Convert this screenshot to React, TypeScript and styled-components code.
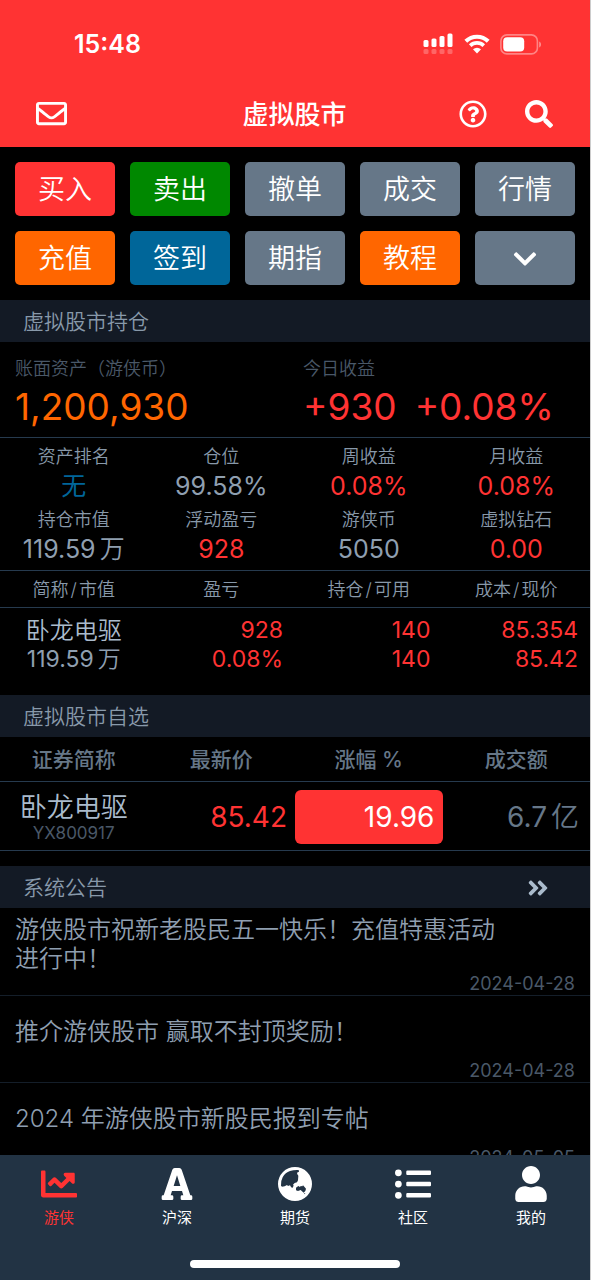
import React from "react";
import styled, { createGlobalStyle } from "styled-components";
import {
  FaRegEnvelope,
  FaRegQuestionCircle,
  FaSearch,
  FaChevronDown,
  FaAngleDoubleRight,
  FaChartLine,
  FaListUl,
  FaUser,
} from "react-icons/fa";

const color = {
  red: "#ff3333",
  orange: "#ff6600",
  green: "#008800",
  blue: "#006699",
  slate: "#667788",
  bar: "#223344",
  section: "#131a25",
  line: "#263a4e",
  faint: "#4a5868",
  muted: "#8899aa",
  text: "#8f9fb0",
  bright: "#aabbcc",
};

const GlobalStyle = createGlobalStyle`
  *, *::before, *::after { box-sizing: border-box; }
  body {
    margin: 0;
    background: #000;
    font-family: Inter, "Noto Sans CJK SC", sans-serif;
    font-weight: 350;
    color: ${color.text};
  }
  button { font: inherit; border: 0; padding: 0; cursor: pointer; }
  a { color: inherit; text-decoration: none; }
  h1, h2, p, dl, dd, ul { margin: 0; padding: 0; font-weight: inherit; }
  ul { list-style: none; }
`;

const Screen = styled.div`
  display: flex;
  flex-direction: column;
  height: 100vh;
  overflow: hidden;
  border-right: 1px solid #ccc;
  background: #000;
`;

const Header = styled.header`
  flex: none;
  background: ${color.red};
  color: #fff;
`;

const StatusBar = styled.div`
  display: flex;
  align-items: center;
  justify-content: space-between;
  height: 80px;
  padding: 8px 48px 0 74px;
`;

const Clock = styled.time`
  font-size: 25px;
  font-weight: 600;
  line-height: 32px;
`;

const StatusIcons = styled.div`
  display: flex;
  align-items: center;
  gap: 10px;
`;

const NavBar = styled.div`
  display: grid;
  grid-template-columns: 1fr auto 1fr;
  align-items: center;
  height: 67px;
  padding: 0 37px 0 36px;
`;

const Title = styled.h1`
  padding-top: 2px;
  font-size: 26px;
  font-weight: 500;
  line-height: 36px;
`;

const NavActions = styled.div<{ $end?: boolean }>`
  display: flex;
  align-items: center;
  gap: 38px;
  justify-content: ${(p) => (p.$end ? "flex-end" : "flex-start")};
`;

const IconButton = styled.button`
  display: flex;
  background: none;
  color: inherit;
`;

const Content = styled.main`
  flex: 1;
  min-height: 0;
  overflow-y: auto;
  scrollbar-width: none;
`;

const Actions = styled.nav`
  display: grid;
  grid-template-columns: repeat(5, 1fr);
  gap: 15px;
  padding: 15px;
`;

const ActionButton = styled.button<{ $bg: string }>`
  display: flex;
  align-items: center;
  justify-content: center;
  height: 54px;
  padding-top: 2px;
  border-radius: 5px;
  background: ${(p) => p.$bg};
  color: #fff;
  font-size: 27px;
  line-height: 52px;
`;

const SectionHead = styled.div`
  display: flex;
  align-items: center;
  justify-content: space-between;
  height: 42px;
  padding: 2px 40px 0 23px;
  background: ${color.section};
  color: ${color.muted};
`;

const SectionTitle = styled.h2`
  font-size: 21px;
  line-height: 30px;
`;

const MoreLink = styled.a`
  display: flex;
  color: ${color.bright};
`;

/* Chinese characters that directly follow a figure */
const Unit = styled.span`
  margin-left: 4px;
  font-weight: 350;
`;

const Slash = styled.span`
  margin: 0 2px;
`;

const Summary = styled.dl`
  display: grid;
  grid-template-columns: 288px 1fr;
  padding: 13px 15px 6px;
  border-bottom: 1px solid ${color.line};
`;

const SummaryLabel = styled.dt`
  font-size: 18px;
  line-height: 28px;
  color: ${color.faint};
`;

const SummaryValue = styled.dd<{ $color: string }>`
  display: flex;
  gap: 18px;
  font-size: 37px;
  font-weight: 400;
  line-height: 48px;
  color: ${(p) => p.$color};
`;

const Stats = styled.dl`
  display: grid;
  grid-template-columns: repeat(4, 1fr);
  row-gap: 4px;
  padding: 6px 0 4px;
  border-bottom: 1px solid ${color.line};
  text-align: center;
`;

const StatLabel = styled.dt`
  font-size: 18px;
  line-height: 26px;
  color: ${color.muted};
`;

const StatValue = styled.dd<{ $color?: string }>`
  font-size: 25px;
  font-weight: 400;
  line-height: 33px;
  color: ${(p) => p.$color ?? color.text};
`;

const Table = styled.table`
  width: 100%;
  table-layout: fixed;
  border-collapse: separate;
  border-spacing: 0;
`;

const HeadCell = styled.th<{ $large?: boolean }>`
  height: ${(p) => (p.$large ? 45 : 37)}px;
  padding: 2px 0 0;
  border-bottom: 1px solid ${color.line};
  font-size: ${(p) => (p.$large ? 21 : 18)}px;
  font-weight: ${(p) => (p.$large ? 500 : 350)};
  line-height: 28px;
  color: ${(p) => (p.$large ? color.slate : color.muted)};
`;

const HoldingCell = styled.td<{ $name?: boolean }>`
  padding: ${(p) => (p.$name ? "8px 0 21px" : "8px 12px 21px 0")};
  text-align: ${(p) => (p.$name ? "center" : "right")};
  font-size: 23px;
  font-weight: 400;
  line-height: 29px;
  color: ${(p) => (p.$name ? color.text : color.red)};
`;

const QuoteCell = styled.td<{ $name?: boolean; $color?: string; $right?: number }>`
  height: 69px;
  padding: ${(p) => (p.$name ? 4 : 2)}px ${(p) => p.$right ?? 0}px 0 0;
  border-bottom: 1px solid ${color.line};
  text-align: ${(p) => (p.$name ? "center" : "right")};
  font-size: 28px;
  font-weight: 400;
  line-height: 34px;
  color: ${(p) => p.$color ?? color.slate};
`;

const StockName = styled.div<{ $size: number }>`
  font-size: ${(p) => p.$size}px;
  font-weight: 350;
  line-height: 29px;
  color: ${color.bright};
`;

const StockCode = styled.div`
  font-size: 17px;
  line-height: 22px;
  color: ${color.faint};
`;

const ChangeBadge = styled.div`
  padding: 0 8px;
  border-radius: 6px;
  background: ${color.red};
  color: #fff;
  line-height: 54px;
`;

const Watchlist = styled.section`
  padding-bottom: 15px;
`;

const NoticeList = styled.ul`
  padding-top: 1px;
`;

const Notice = styled.li`
  display: flex;
  flex-direction: column;
  justify-content: space-between;
  min-height: 87px;
  padding: 6px 15px 1px;
  border-bottom: 1px solid #141e29;
`;

const NoticeLink = styled.a`
  display: flex;
  align-items: center;
  min-height: 58px;
  padding-right: 64px;
  font-size: 24px;
  line-height: 29px;
  color: ${color.text};
`;

const NoticeDate = styled.time`
  text-align: right;
  font-size: 18px;
  font-weight: 400;
  line-height: 21px;
  color: ${color.faint};
`;

const TabBar = styled.nav`
  flex: none;
  display: grid;
  grid-template-columns: repeat(5, 1fr);
  padding-top: 11px;
  background: ${color.bar};
`;

const Tab = styled.a<{ $active?: boolean }>`
  display: flex;
  flex-direction: column;
  align-items: center;
  gap: 4px;
  color: ${(p) => (p.$active ? color.red : "#fff")};
  font-size: 15px;
  font-weight: 400;
  line-height: 24px;
`;

const HomeArea = styled.div`
  flex: none;
  display: flex;
  justify-content: center;
  padding: 30px 0 12px;
  background: ${color.bar};
`;

const HomeIndicator = styled.div`
  width: 210px;
  height: 8px;
  border-radius: 4px;
  background: #fff;
`;

const SignalIcon = () => (
  <svg width="31" height="22" viewBox="0 0 31 22" fill="#fff" aria-hidden="true">
    <rect x="0.500" y="7" width="5" height="7" rx="1.500" />
    <rect x="8.500" y="5.500" width="5" height="8.500" rx="1.500" />
    <rect x="16.500" y="3" width="5" height="11" rx="1.500" />
    <rect x="24.500" y="0.500" width="5" height="13.500" rx="1.500" />
    <g opacity="0.250">
      <rect x="0.500" y="16" width="5" height="5" rx="1.500" />
      <rect x="8.500" y="16" width="5" height="5" rx="1.500" />
      <rect x="16.500" y="16" width="5" height="5" rx="1.500" />
      <rect x="24.500" y="16" width="5" height="5" rx="1.500" />
    </g>
  </svg>
);

const WifiIcon = () => (
  <svg width="26" height="20" viewBox="0 0 26 20" fill="none" stroke="#fff" aria-hidden="true">
    <path d="M1.800 7.200a16 16 0 0 1 22.400 0" strokeWidth="4" />
    <path d="M6.200 11.600a9.800 9.800 0 0 1 13.600 0" strokeWidth="3.600" />
    <path d="M13 19.500l-4-4.300a6 6 0 0 1 8 0z" fill="#fff" stroke="none" />
  </svg>
);

const BatteryIcon = () => (
  <svg width="42" height="21" viewBox="0 0 42 21" aria-hidden="true">
    <rect x="0.900" y="0.900" width="36.500" height="19" rx="6" fill="none" stroke="#fff" strokeOpacity="0.400" strokeWidth="1.600" />
    <rect x="3.200" y="3.300" width="21" height="14.200" rx="4" fill="#fff" />
    <path d="M39.200 7.400c2.400 1 2.400 5 0 6z" fill="#fff" fillOpacity="0.450" />
  </svg>
);

type IconProps = { size: number };

const SlabIcon = ({ size }: IconProps) => (
  <svg width={size} height={size} viewBox="-8 -6 108 108" fill="currentColor" fillRule="evenodd" aria-hidden="true">
    <path d="M39 0h14q5 0 7 5l26 77h2q4 0 4 4v6q0 4-4 4H61q-4 0-4-4v-6q0-4 4-4h4l-4-13H31l-4 13h4q4 0 4 4v6q0 4-4 4H4q-4 0-4-4v-6q0-4 4-4h2L32 5q2-5 7-5zM46 22L36 54h20z" />
  </svg>
);

const GlobeIcon = ({ size }: IconProps) => (
  <svg width={size} height={size} viewBox="-3 -3 108 108" fill="currentColor" fillRule="evenodd" aria-hidden="true">
    <path d="M51 0a51 51 0 1 1 0 102a51 51 0 1 1 0-102zM9 56Q8 42 14 31Q22 16 36 12Q48 8 62 9L63 14L57 17L58 22L61 26L60 40L57 46L50 48L45 53L47 56L43 63L39 60L36 55L30 57L27 54L20 58L12 59zM54 62L61 57L66 60L68 57L73 58L75 55L79 59L84 65L82 72L77 77L72 73L68 69L60 72L54 70zM78 79l4-1-2 4z" />
  </svg>
);

const actions = [
  { label: "买入", bg: color.red },
  { label: "卖出", bg: color.green },
  { label: "撤单", bg: color.slate },
  { label: "成交", bg: color.slate },
  { label: "行情", bg: color.slate },
  { label: "充值", bg: color.orange },
  { label: "签到", bg: color.blue },
  { label: "期指", bg: color.slate },
  { label: "教程", bg: color.orange },
];

type Stat = { label: string; value?: string; unit?: string; tone?: string };

const stats: Stat[] = [
  { label: "资产排名", value: "无", tone: color.blue },
  { label: "仓位", value: "99.58%" },
  { label: "周收益", value: "0.08%", tone: color.red },
  { label: "月收益", value: "0.08%", tone: color.red },
  { label: "持仓市值", value: "119.59", unit: "万" },
  { label: "浮动盈亏", value: "928", tone: color.red },
  { label: "游侠币", value: "5050" },
  { label: "虚拟钻石", value: "0.00", tone: color.red },
];

const holdingHeads = [["简称", "市值"], ["盈亏"], ["持仓", "可用"], ["成本", "现价"]];

const notices = [
  { title: "游侠股市祝新老股民五一快乐！充值特惠活动进行中！", date: "2024-04-28" },
  { title: "推介游侠股市 赢取不封顶奖励！", date: "2024-04-28" },
  { title: "2024 年游侠股市新股民报到专帖", date: "2024-05-05" },
];

const tabs = [
  { label: "游侠", Icon: FaChartLine },
  { label: "沪深", Icon: SlabIcon },
  { label: "期货", Icon: GlobeIcon },
  { label: "社区", Icon: FaListUl },
  { label: "我的", Icon: FaUser },
];

export default function App() {
  return (
    <Screen>
      <GlobalStyle />
      <Header>
        <StatusBar>
          <Clock>15:48</Clock>
          <StatusIcons>
            <SignalIcon />
            <WifiIcon />
            <BatteryIcon />
          </StatusIcons>
        </StatusBar>
        <NavBar>
          <NavActions>
            <IconButton aria-label="消息">
              <FaRegEnvelope size={31} />
            </IconButton>
          </NavActions>
          <Title>虚拟股市</Title>
          <NavActions $end>
            <IconButton aria-label="帮助">
              <FaRegQuestionCircle size={28} />
            </IconButton>
            <IconButton aria-label="搜索">
              <FaSearch size={28} />
            </IconButton>
          </NavActions>
        </NavBar>
      </Header>

      <Content>
        <Actions>
          {actions.map((a) => (
            <ActionButton key={a.label} $bg={a.bg}>
              {a.label}
            </ActionButton>
          ))}
          <ActionButton $bg={color.slate} aria-label="更多">
            <FaChevronDown size={26} />
          </ActionButton>
        </Actions>

        <section>
          <SectionHead>
            <SectionTitle>虚拟股市持仓</SectionTitle>
          </SectionHead>
          <Summary>
            <div>
              <SummaryLabel>账面资产（游侠币）</SummaryLabel>
              <SummaryValue $color={color.orange}>1,200,930</SummaryValue>
            </div>
            <div>
              <SummaryLabel>今日收益</SummaryLabel>
              <SummaryValue $color={color.red}>
                <span>+930</span>
                <span>+0.08%</span>
              </SummaryValue>
            </div>
          </Summary>
          <Stats>
            {stats.map((s) => (
              <div key={s.label}>
                <StatLabel>{s.label}</StatLabel>
                <StatValue $color={s.tone}>
                  {s.value}
                  {s.unit && <Unit>{s.unit}</Unit>}
                </StatValue>
              </div>
            ))}
          </Stats>
          <Table>
            <thead>
              <tr>
                {holdingHeads.map(([first, second]) => (
                  <HeadCell key={first}>
                    {first}
                    {second && <Slash>/</Slash>}
                    {second}
                  </HeadCell>
                ))}
              </tr>
            </thead>
            <tbody>
              <tr>
                <HoldingCell $name>
                  <StockName $size={24}>卧龙电驱</StockName>
                  119.59<Unit>万</Unit>
                </HoldingCell>
                <HoldingCell>
                  928
                  <br />
                  0.08%
                </HoldingCell>
                <HoldingCell>
                  140
                  <br />
                  140
                </HoldingCell>
                <HoldingCell>
                  85.354
                  <br />
                  85.42
                </HoldingCell>
              </tr>
            </tbody>
          </Table>
        </section>

        <Watchlist>
          <SectionHead>
            <SectionTitle>虚拟股市自选</SectionTitle>
          </SectionHead>
          <Table>
            <thead>
              <tr>
                <HeadCell $large>证券简称</HeadCell>
                <HeadCell $large>最新价</HeadCell>
                <HeadCell $large>涨幅 %</HeadCell>
                <HeadCell $large>成交额</HeadCell>
              </tr>
            </thead>
            <tbody>
              <tr>
                <QuoteCell $name>
                  <StockName $size={27}>卧龙电驱</StockName>
                  <StockCode>YX800917</StockCode>
                </QuoteCell>
                <QuoteCell $color={color.red} $right={8}>
                  85.42
                </QuoteCell>
                <QuoteCell>
                  <ChangeBadge>19.96</ChangeBadge>
                </QuoteCell>
                <QuoteCell $right={11}>
                  6.7<Unit>亿</Unit>
                </QuoteCell>
              </tr>
            </tbody>
          </Table>
        </Watchlist>

        <section>
          <SectionHead>
            <SectionTitle>系统公告</SectionTitle>
            <MoreLink href="#notices" aria-label="更多公告">
              <FaAngleDoubleRight size={24} />
            </MoreLink>
          </SectionHead>
          <NoticeList id="notices">
            {notices.map((n) => (
              <Notice key={n.title}>
                <NoticeLink href="#notices">{n.title}</NoticeLink>
                <NoticeDate>{n.date}</NoticeDate>
              </Notice>
            ))}
          </NoticeList>
        </section>
      </Content>

      <TabBar>
        {tabs.map(({ label, Icon }, i) => (
          <Tab key={label} href="#" $active={i === 0}>
            <Icon size={36} />
            {label}
          </Tab>
        ))}
      </TabBar>
      <HomeArea>
        <HomeIndicator />
      </HomeArea>
    </Screen>
  );
}
